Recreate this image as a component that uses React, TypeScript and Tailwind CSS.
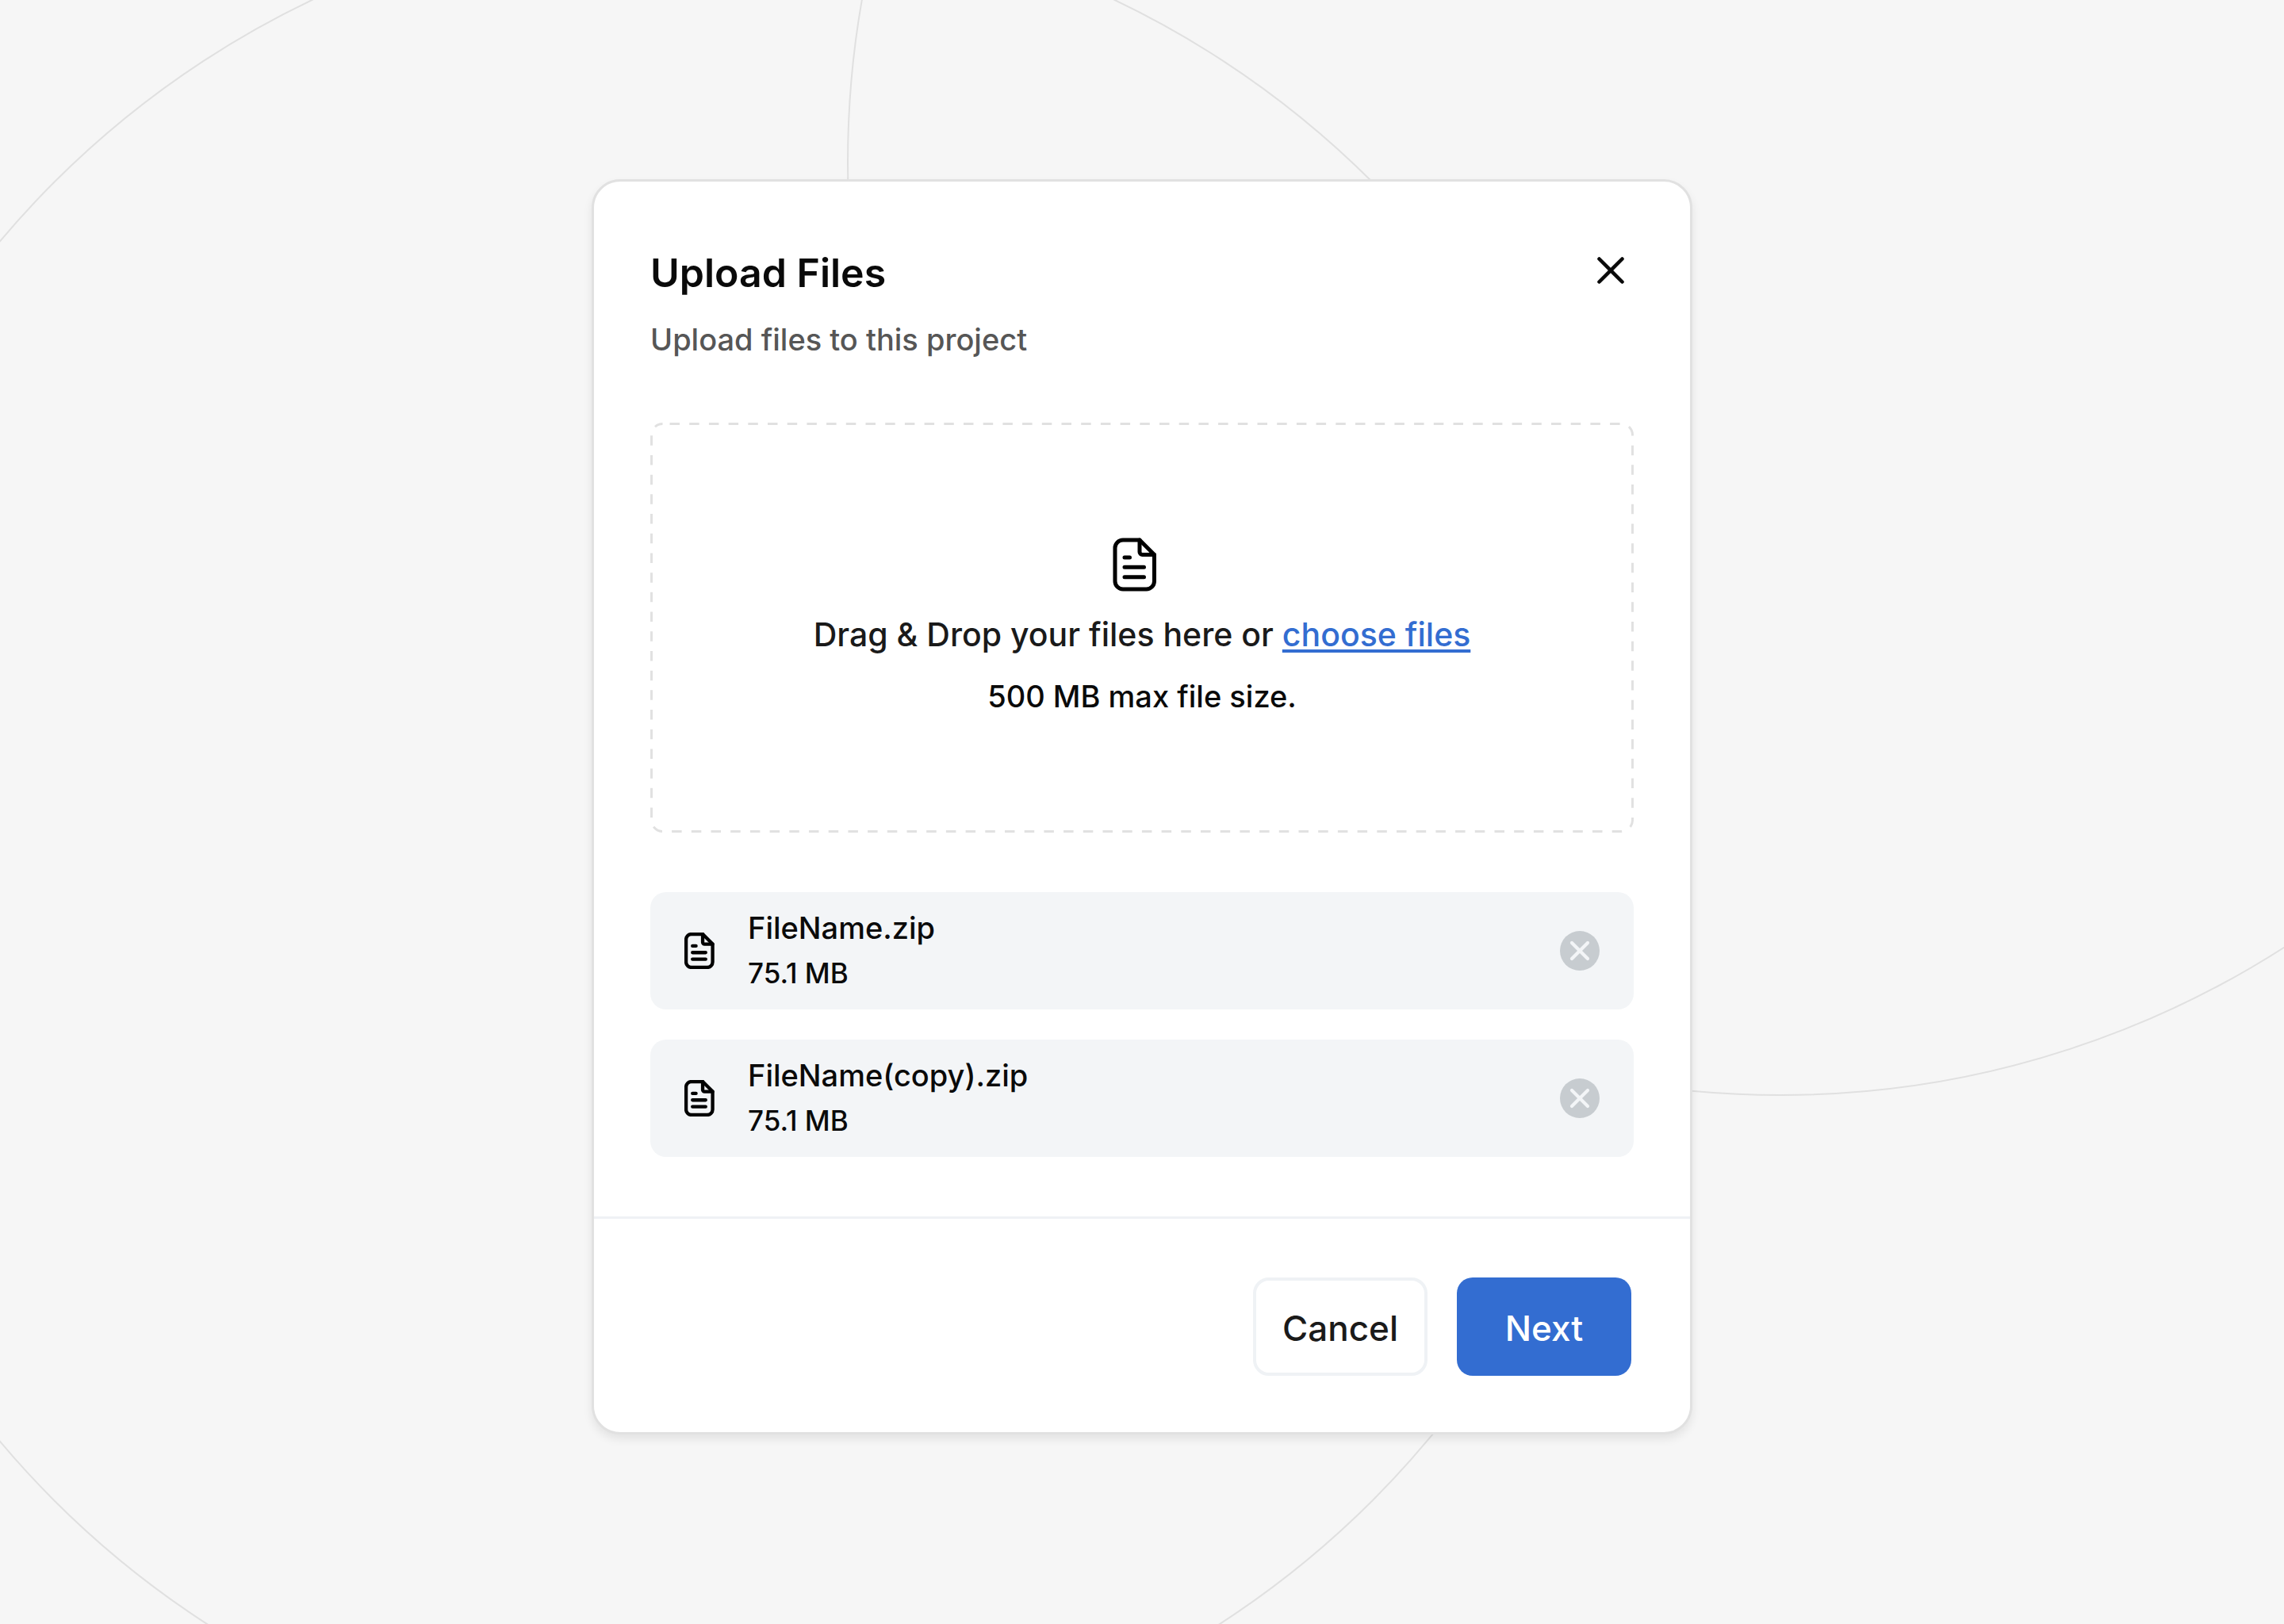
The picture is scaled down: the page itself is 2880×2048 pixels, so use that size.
import React from "react";
import { X } from "lucide-react";

interface UploadedFile {
  name: string;
  size: string;
}

const files: UploadedFile[] = [
  { name: "FileName.zip", size: "75.1 MB" },
  { name: "FileName(copy).zip", size: "75.1 MB" },
];

function DocumentIcon({
  className,
  viewBox = "0 0 56 68",
  strokeWidth,
}: {
  className: string;
  viewBox?: string;
  strokeWidth: number;
}) {
  return (
    <svg
      className={className}
      viewBox={viewBox}
      fill="none"
      stroke="currentColor"
      strokeWidth={strokeWidth}
      strokeLinecap="round"
      strokeLinejoin="round"
      aria-hidden="true"
    >
      <path d="M34 3H13A10 10 0 0 0 3 13V55A10 10 0 0 0 13 65H42.500A10 10 0 0 0 52.500 55V21.500L34 3Z" />
      <path d="M34 3V18A3.500 3.500 0 0 0 37.500 21.500H52.500" />
      <path d="M15 25H21.500M15 37.300H39.500M15 49.700H39.500" />
    </svg>
  );
}

function Background() {
  return (
    <svg
      className="absolute inset-0 size-full"
      viewBox="0 0 2880 2048"
      preserveAspectRatio="xMidYMid slice"
      fill="none"
      stroke="#e0e0e0"
      strokeWidth="2"
      aria-hidden="true"
    >
      <circle cx="899.5" cy="1061" r="1175.5" />
      <circle cx="2245" cy="205" r="1176" />
    </svg>
  );
}

function DropZone() {
  return (
    <section className="relative mt-[81px] flex min-h-[517px] flex-col items-center justify-center gap-7 pb-1 text-center font-medium">
      {/* css dashes are too short at this border width */}
      <svg className="pointer-events-none absolute inset-0 size-full" aria-hidden="true">
        <rect
          className="h-[calc(100%-3px)] w-[calc(100%-3px)] fill-none stroke-[#e1e1e1]"
          x="1.5"
          y="1.5"
          rx="14"
          strokeWidth="3"
          strokeDasharray="12.5 12.2"
          strokeDashoffset="-9"
        />
      </svg>
      <DocumentIcon
        className="h-[68px] w-[74px] text-black"
        viewBox="0 0 74 68"
        strokeWidth={5}
      />
      <p className="text-[41px] leading-[52px] text-[#1a1a1a]">
        Drag &amp; Drop your files here or{" "}
        <a
          href="#choose"
          className="text-[#336dd1] underline decoration-4 underline-offset-4 [text-decoration-skip-ink:none]"
        >
          choose files
        </a>
      </p>
      <p className="text-[38px] leading-[48px]">500 MB max file size.</p>
    </section>
  );
}

function FileRow({ file }: { file: UploadedFile }) {
  return (
    <li className="flex h-[148px] items-center rounded-[20px] bg-[#f3f5f7] px-[43px]">
      <DocumentIcon className="h-[46px] w-[38px] shrink-0 text-black" strokeWidth={6.4} />
      <div className="ml-[42px] flex min-w-0 flex-1 flex-col gap-3 pb-1 font-medium">
        <span className="truncate text-[38px] leading-[48px]">{file.name}</span>
        <span className="text-[35px] leading-[42px]">{file.size}</span>
      </div>
      <button
        type="button"
        aria-label={`Remove ${file.name}`}
        className="flex size-[50px] shrink-0 items-center justify-center rounded-full bg-[#c7ccd0] text-[#f3f5f7]"
      >
        <X size={40} strokeWidth={2.5} />
      </button>
    </li>
  );
}

export default function App() {
  return (
    <div className="relative flex min-h-screen items-start justify-center overflow-hidden bg-[#f6f6f6] pt-[226px] pb-16 font-['Inter',sans-serif] text-[#0a0a0a]">
      <Background />
      <main className="relative w-full max-w-[1388px] rounded-[36px] border-[3px] border-[#e1e1e1] bg-white shadow-[0_6px_12px_rgba(0,0,0,0.08)]">
        <div className="px-[71px] pt-[83px] pb-[75px]">
          <header className="flex items-start justify-between">
            <div>
              <h1 className="text-[50px] leading-[64px] font-semibold">Upload Files</h1>
              <p className="mt-7 text-[38px] leading-[48px] font-medium text-[#565656]">
                Upload files to this project
              </p>
            </div>
            <button type="button" aria-label="Close">
              <X size={58} strokeWidth={1.9} />
            </button>
          </header>
          <DropZone />
          <ul className="mt-[75px] flex flex-col gap-[38px]">
            {files.map((file) => (
              <FileRow key={file.name} file={file} />
            ))}
          </ul>
        </div>
        <footer className="flex justify-end gap-[37px] border-t-[3px] border-[#eff1f5] px-[74px] pt-[74px] pb-[71px] text-[44px] font-medium">
          <button
            type="button"
            className="h-[124px] w-[220px] rounded-[20px] border-4 border-[#eff2f5] pt-1 text-[#1a1a1a]"
          >
            Cancel
          </button>
          <button
            type="button"
            className="h-[124px] w-[220px] rounded-[20px] bg-[#336dd1] pt-1 text-white"
          >
            Next
          </button>
        </footer>
      </main>
    </div>
  );
}
